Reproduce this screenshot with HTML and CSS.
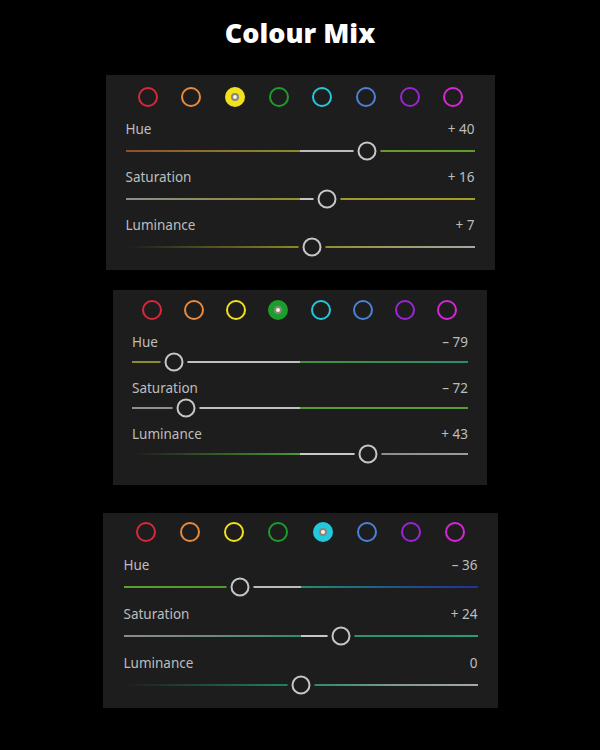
FILE: index.html
```html
<!DOCTYPE html>
<html lang="en">
<head>
    <meta charset="UTF-8">
    <meta name="viewport" content="width=device-width, initial-scale=1.0">
    <title>Colour Mix</title>
    <link rel="stylesheet" href="styles.css">
</head>
<body>

    <h1 class="title">Colour Mix</h1>

    <!-- Yellow selected -->
    <div class="panel panel-yellow">
        <div class="dots">
            <span class="dot red"></span>
            <span class="dot orange"></span>
            <span class="dot yellow on"></span>
            <span class="dot green"></span>
            <span class="dot aqua"></span>
            <span class="dot blue"></span>
            <span class="dot purple"></span>
            <span class="dot magenta"></span>
        </div>
        <div class="row">
            <div class="row-head"><span>Hue</span><span>+ 40</span></div>
            <div class="track y-hue"><span class="thumb" style="--v: 69.1%"></span></div>
        </div>
        <div class="row">
            <div class="row-head"><span>Saturation</span><span>+ 16</span></div>
            <div class="track y-sat"><span class="thumb" style="--v: 57.6%"></span></div>
        </div>
        <div class="row">
            <div class="row-head"><span>Luminance</span><span>+ 7</span></div>
            <div class="track y-lum"><span class="thumb" style="--v: 53.3%"></span></div>
        </div>
    </div>

    <!-- Green selected -->
    <div class="panel panel-green">
        <div class="dots">
            <span class="dot red"></span>
            <span class="dot orange"></span>
            <span class="dot yellow"></span>
            <span class="dot green on"></span>
            <span class="dot aqua"></span>
            <span class="dot blue"></span>
            <span class="dot purple"></span>
            <span class="dot magenta"></span>
        </div>
        <div class="row">
            <div class="row-head"><span>Hue</span><span>– 79</span></div>
            <div class="track g-hue"><span class="thumb" style="--v: 12.5%"></span></div>
        </div>
        <div class="row">
            <div class="row-head"><span>Saturation</span><span>– 72</span></div>
            <div class="track g-sat"><span class="thumb" style="--v: 16%"></span></div>
        </div>
        <div class="row">
            <div class="row-head"><span>Luminance</span><span>+ 43</span></div>
            <div class="track g-lum"><span class="thumb" style="--v: 70.2%"></span></div>
        </div>
    </div>

    <!-- Aqua selected -->
    <div class="panel panel-aqua">
        <div class="dots">
            <span class="dot red"></span>
            <span class="dot orange"></span>
            <span class="dot yellow"></span>
            <span class="dot green"></span>
            <span class="dot aqua on"></span>
            <span class="dot blue"></span>
            <span class="dot purple"></span>
            <span class="dot magenta"></span>
        </div>
        <div class="row">
            <div class="row-head"><span>Hue</span><span>– 36</span></div>
            <div class="track a-hue"><span class="thumb" style="--v: 33%"></span></div>
        </div>
        <div class="row">
            <div class="row-head"><span>Saturation</span><span>+ 24</span></div>
            <div class="track a-sat"><span class="thumb" style="--v: 61.3%"></span></div>
        </div>
        <div class="row">
            <div class="row-head"><span>Luminance</span><span>0</span></div>
            <div class="track a-lum"><span class="thumb" style="--v: 50%"></span></div>
        </div>
    </div>

</body>
</html>
```

FILE: styles.css
```css
body {
    margin: 0;
    background: #000;
    font-family: "Noto Sans", "Open Sans", sans-serif;
    color: #bdbdbd;
}
.title {
    margin: 17px 0 26px;
    font-family: "Open Sans", sans-serif;
    font-weight: 800;
    font-size: 27px;
    line-height: 32px;
    color: #fff;
    text-align: center;
}

/* panels */
.panel {
    --bg: #1d1d1d;
    box-sizing: border-box;
    margin: 0 auto;
    background: var(--bg);
    height: 195px;
}
.panel-yellow {
    width: 389px;
    padding: 12px 20px 0;
}
.panel-green {
    width: 374px;
    margin-top: 20px;
    padding: 10px 19px 0;
}
.panel-aqua {
    width: 395px;
    margin-top: 28px;
    padding: 9px 20px 0 21px;
}

/* colour picker dots */
.dots {
    display: flex;
    justify-content: space-between;
    margin-bottom: 14px;
}
.panel-yellow .dots { padding: 0 11px 0 12px; }
.panel-green .dots { padding: 0 11px 0 10px; }
.panel-aqua .dots { padding: 0 12px; margin-bottom: 15px; }

.dot {
    box-sizing: border-box;
    width: 20px;
    height: 20px;
    border-radius: 50%;
    border: 2.5px solid var(--c);
    display: flex;
    align-items: center;
    justify-content: center;
}
.dot.on {
    background: var(--c);
}
.dot.on::after {
    content: "";
    box-sizing: border-box;
    width: 8px;
    height: 8px;
    border-radius: 50%;
    background: #f4f4e8;
    border: 2px solid rgba(0, 0, 0, 0.45);
}
.red { --c: #d9283a; }
.orange { --c: #e88a3c; }
.yellow { --c: #f3e11c; }
.green { --c: #1b9e2c; }
.aqua { --c: #22c9dd; }
.blue { --c: #4b82d6; }
.purple { --c: #9b25d6; }
.magenta { --c: #d626d8; }

/* slider rows */
.row {
    margin-bottom: 17px;
}
.panel-aqua .row { margin-bottom: 18px; }
.row-head {
    display: flex;
    justify-content: space-between;
    font-size: 13.5px;
    line-height: 16px;
    margin-bottom: 13px;
}
.panel-green .row-head { margin-bottom: 11px; }

.track {
    position: relative;
    height: 2px;
}
.thumb {
    position: absolute;
    left: var(--v);
    top: 50%;
    box-sizing: border-box;
    width: 19px;
    height: 19px;
    border-radius: 50%;
    border: 2px solid #c6c6c6;
    background: var(--bg);
    box-shadow: 0 0 0 4px var(--bg);
    transform: translate(-50%, -50%);
}

/* track colours */
.y-hue {
    background: linear-gradient(to right, #8e4f2c 0%, #8a7a2e 30%, #8c8a2c 50%, #bcbcbc 50%, #bcbcbc 69%, #6a9a2e 69%, #5f9a30 100%);
}
.y-sat {
    background: linear-gradient(to right, #8e8e8e 0%, #8f8a3a 40%, #9a9228 50%, #c4c4c4 50%, #c4c4c4 57.6%, #a09828 57.6%, #a49c26 100%);
}
.y-lum {
    background: linear-gradient(to right, rgba(140, 138, 32, 0) 0%, #8c8a24 50%, #c4c4c4 50%, #c4c4c4 53.3%, #8e8c28 53.3%, #9c9a60 75%, #a6a6a6 100%);
}
.g-hue {
    background: linear-gradient(to right, #8c8a32 0%, #8c8a32 12.5%, #c0c0c0 12.5%, #c0c0c0 50%, #45913c 50%, #2c8a6e 100%);
}
.g-sat {
    background: linear-gradient(to right, #909090 0%, #909090 16%, #c0c0c0 16%, #c0c0c0 50%, #5a9a30 50%, #5c9c30 100%);
}
.g-lum {
    background: linear-gradient(to right, rgba(70, 140, 40, 0) 0%, #4e9a32 50%, #c8c8c8 50%, #c8c8c8 70.2%, #8a8a8a 70.2%, #9c9c9c 100%);
}
.a-hue {
    background: linear-gradient(to right, #58a032 0%, #52972e 33%, #bcbcbc 33%, #bcbcbc 50%, #22906e 50%, #1e5a8a 75%, #22309e 100%);
}
.a-sat {
    background: linear-gradient(to right, #8c8c8c 0%, #5a8a7c 35%, #2c8c74 50%, #c6c6c6 50%, #c6c6c6 61.3%, #2a9276 61.3%, #2a9a7a 100%);
}
.a-lum {
    background: linear-gradient(to right, rgba(30, 130, 100, 0) 0%, #208a68 50%, #228a6a 52%, #7a9a90 75%, #a8a8a8 100%);
}
```
